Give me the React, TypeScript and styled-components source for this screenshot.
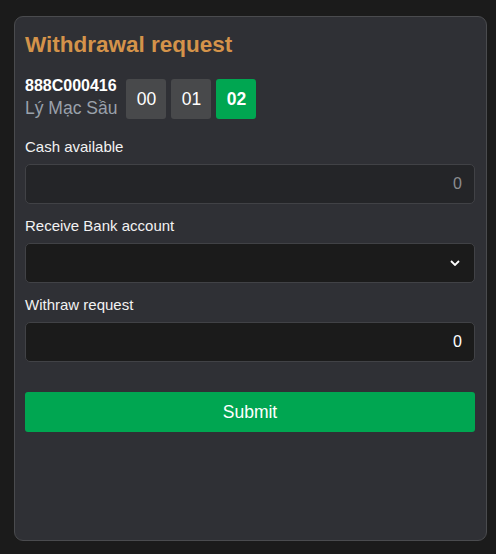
import React from "react";
import styled, { createGlobalStyle } from "styled-components";

const Global = createGlobalStyle`
  html, body {
    margin: 0;
    padding: 0;
    background: #1b1b1b;
    font-family: "Liberation Sans", Arial, sans-serif;
  }
  * { box-sizing: border-box; }
`;

const Page = styled.div`
  padding: 16px 9px 13px 14px;
  width: 496px;
`;

const Card = styled.div`
  height: 525px;
  background: #2f3035;
  border: 1px solid #4a4b4e;
  border-radius: 9px;
  padding: 14px 11px 10px 10px;
  display: flex;
  flex-direction: column;
`;

const Title = styled.h1`
  margin: 0 0 20px;
  font-size: 22.5px;
  line-height: 28px;
  font-weight: 700;
  color: #d4934a;
`;

const AccountRow = styled.div`
  display: flex;
  align-items: center;
  gap: 9px;
  height: 40px;
`;

const Info = styled.div`
  display: flex;
  flex-direction: column;
`;

const AccountId = styled.div`
  font-size: 16px;
  line-height: 18px;
  font-weight: 700;
  color: #ffffff;
`;

const AccountName = styled.div`
  font-size: 17.5px;
  line-height: 26px;
  color: #9aa1ab;
`;

const Boxes = styled.div`
  display: flex;
  gap: 5px;
`;

const Box = styled.div<{ $active?: boolean }>`
  width: 40px;
  height: 40px;
  border-radius: 3px;
  display: flex;
  align-items: center;
  justify-content: center;
  font-size: 17.5px;
  font-weight: ${(p) => (p.$active ? 700 : 400)};
  color: #ffffff;
  background: ${(p) => (p.$active ? "#00a651" : "#48494b")};
`;

const Field = styled.div<{ $first?: boolean }>`
  margin-top: ${(p) => (p.$first ? "17px" : "11px")};
  display: flex;
  flex-direction: column;
`;

const Label = styled.label`
  font-size: 15px;
  line-height: 22px;
  color: #f2f2f2;
  margin-bottom: 6px;
`;

const InputBox = styled.div<{ $bg: string; $color: string }>`
  height: 40px;
  border: 1px solid #414246;
  border-radius: 5px;
  background: ${(p) => p.$bg};
  color: ${(p) => p.$color};
  display: flex;
  align-items: center;
  justify-content: flex-end;
  padding: 0 12px;
  font-size: 16px;
`;

const Chevron = styled.svg`
  margin-right: 2px;
`;

const Submit = styled.button`
  margin-top: 30px;
  height: 40px;
  border: none;
  border-radius: 3px;
  background: #00a651;
  color: #ffffff;
  font-family: "Liberation Sans", Arial, sans-serif;
  font-size: 17.5px;
  padding: 0;
`;

export default function App() {
  return (
    <Page>
      <Global />
      <Card>
        <Title>Withdrawal request</Title>
        <AccountRow>
          <Info>
            <AccountId>888C000416</AccountId>
            <AccountName>Lý Mạc Sầu</AccountName>
          </Info>
          <Boxes>
            <Box>00</Box>
            <Box>01</Box>
            <Box $active>02</Box>
          </Boxes>
        </AccountRow>
        <Field $first>
          <Label>Cash available</Label>
          <InputBox $bg="#242528" $color="#8c8d90">0</InputBox>
        </Field>
        <Field>
          <Label>Receive Bank account</Label>
          <InputBox $bg="#1b1b1b" $color="#ffffff">
            <Chevron width="10" height="6" viewBox="0 0 10 6">
              <path d="M1 1 L5 5 L9 1" fill="none" stroke="#ffffff" strokeWidth="1.8" />
            </Chevron>
          </InputBox>
        </Field>
        <Field>
          <Label>Withraw request</Label>
          <InputBox $bg="#1b1b1b" $color="#ffffff">0</InputBox>
        </Field>
        <Submit>Submit</Submit>
      </Card>
    </Page>
  );
}
